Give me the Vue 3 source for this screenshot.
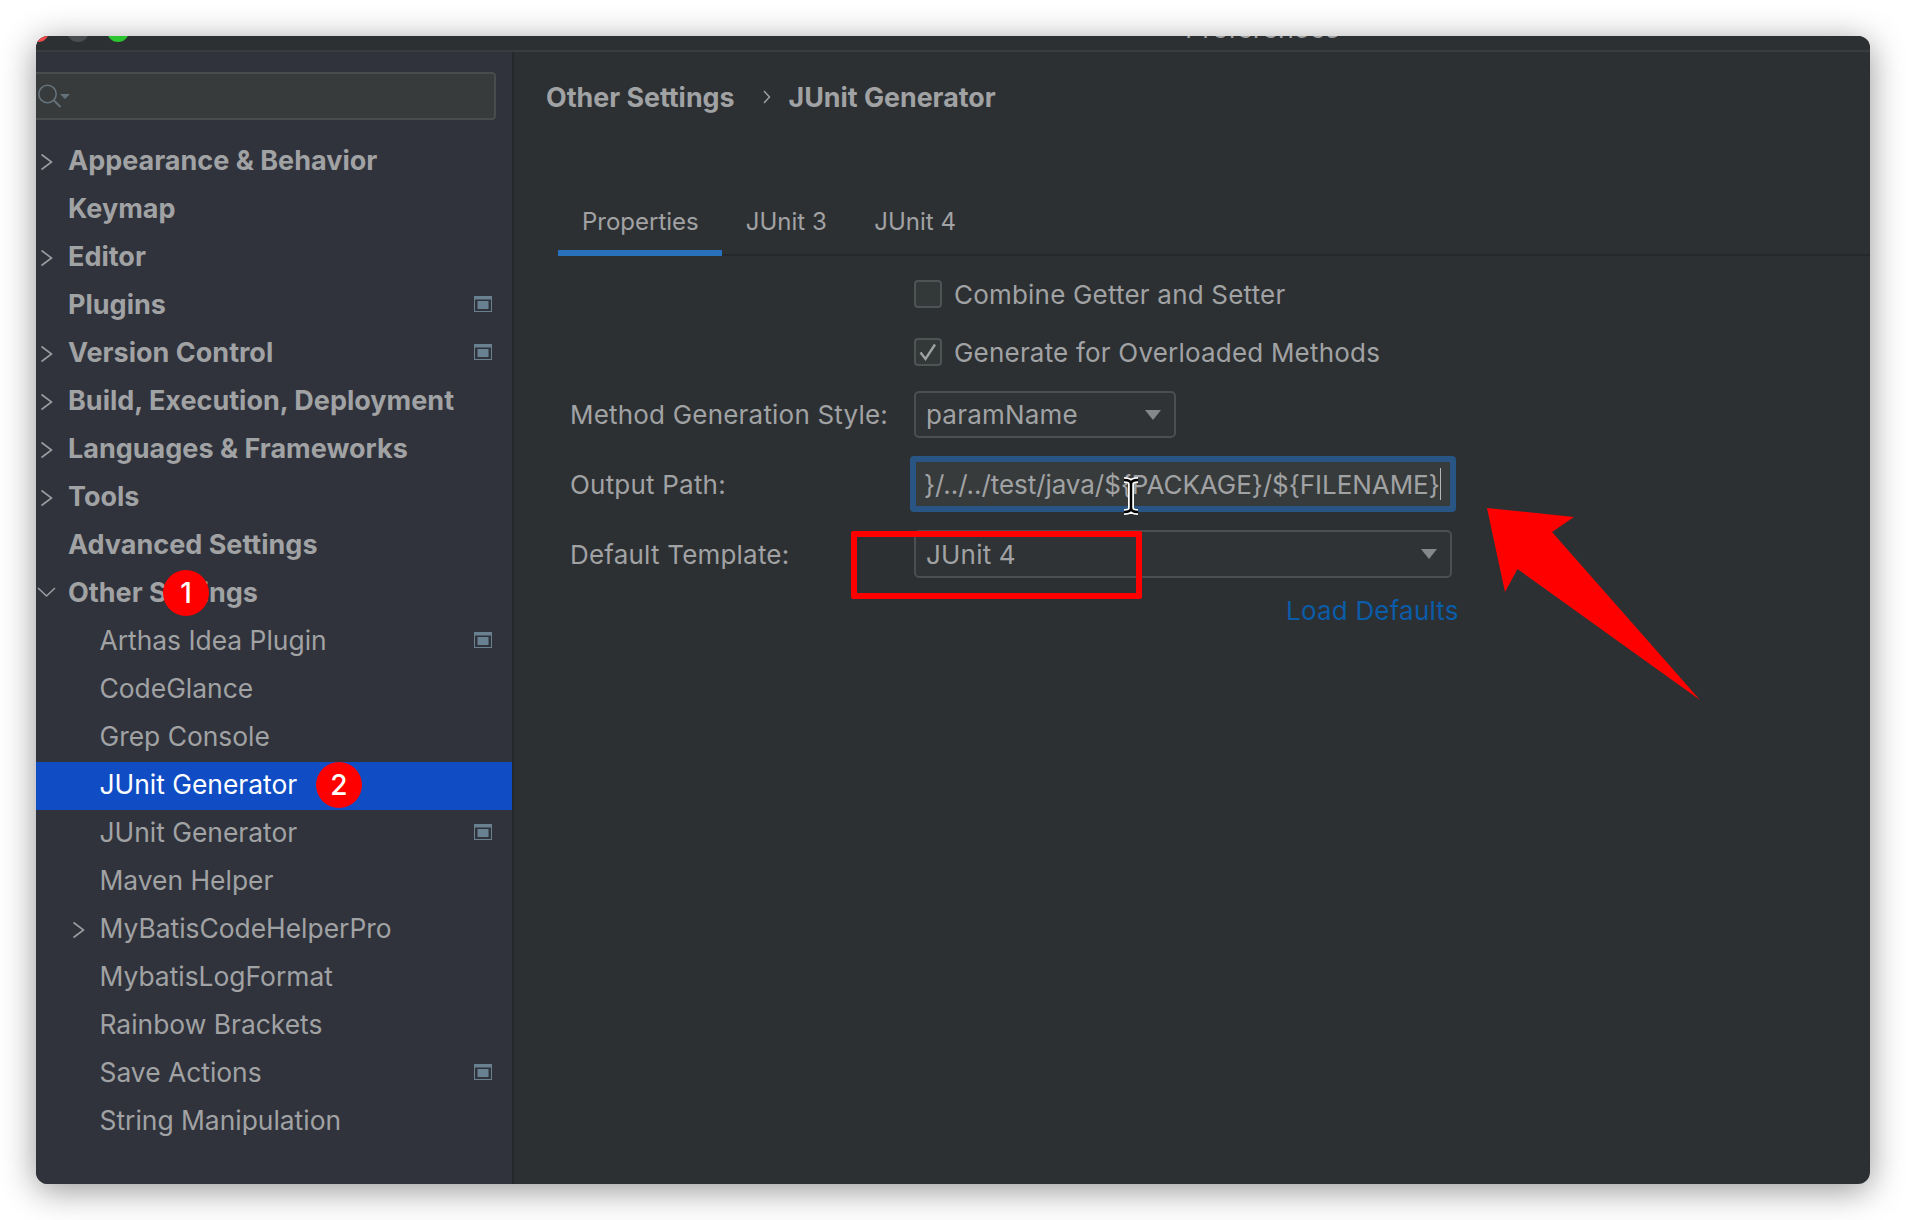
<template>
  <div class="page">
    <div class="window">
      <div class="titlebar">
        <span class="light red"></span>
        <span class="light grey"></span>
        <span class="light green"></span>
        <span class="title">Preferences</span>
      </div>
      <div class="body">
        <aside class="sidebar">
          <div class="search">
            <svg width="34" height="28" viewBox="0 0 34 28">
              <circle cx="9.500" cy="11" r="8.700" fill="none" stroke="#66727b" stroke-width="1.600" />
              <path d="M16 17.500l6.500 6.500" stroke="#66727b" stroke-width="2" />
              <path d="M22 11h10l-5 5z" fill="#66727b" />
            </svg>
          </div>
          <ul class="tree">
            <li
              v-for="(item, i) in items"
              :key="i"
              class="row"
              :class="{ top: !item.child, selected: item.selected }"
            >
              <svg v-if="item.arrow" class="arrow" :class="{ nested: item.child }" width="14" height="18" viewBox="0 0 14 18">
                <path v-if="item.arrow === 'right'" d="M0.500 1.500l10 7.500-10 7.500" fill="none" stroke="#9a9da0" stroke-width="1.600" />
                <path v-else d="M-3 3l8.500 8 8.500-8" fill="none" stroke="#9a9da0" stroke-width="1.600" />
              </svg>
              <span class="label">{{ item.label }}</span>
              <svg v-if="item.badge" class="badge" width="18" height="16" viewBox="0 0 18 16">
                <rect x="0.500" y="0.500" width="17" height="15" fill="none" stroke="#68808f" />
                <rect x="1" y="1" width="16" height="2.500" fill="#68808f" />
                <rect x="3.500" y="5" width="11" height="8" fill="#68808f" />
              </svg>
            </li>
          </ul>
        </aside>
        <main class="content">
          <div class="crumbs">
            <span>Other Settings</span>
            <svg width="10" height="14" viewBox="0 0 10 14">
              <path d="M2 1l5.500 6-5.500 6" fill="none" stroke="#a0a1a3" stroke-width="1.400" />
            </svg>
            <span>JUnit Generator</span>
          </div>
          <div class="tabs">
            <div class="tab active">Properties</div>
            <div class="tab">JUnit 3</div>
            <div class="tab">JUnit 4</div>
          </div>
          <form class="form" @submit.prevent>
            <div class="check-row">
              <span class="check"></span>
              <span>Combine Getter and Setter</span>
            </div>
            <div class="check-row">
              <span class="check">
                <svg width="20" height="20" viewBox="0 0 20 20">
                  <path d="M2.500 10.500l5 6.500 9.500-14.500" fill="none" stroke="#a0a1a3" stroke-width="2.400" />
                </svg>
              </span>
              <span>Generate for Overloaded Methods</span>
            </div>
            <div class="field method">
              <label>Method Generation Style:</label>
              <div class="select short">
                <span>paramName</span>
                <i class="caret"></i>
              </div>
            </div>
            <div class="field output">
              <label>Output Path:</label>
              <div class="path">
                <span>}/../../test/java/${PACKAGE}/${FILENAME}</span>
                <i class="text-caret"></i>
              </div>
            </div>
            <div class="field template">
              <label>Default Template:</label>
              <div class="select wide">
                <span>JUnit 4</span>
                <i class="caret"></i>
              </div>
            </div>
            <a class="defaults">Load Defaults</a>
          </form>
        </main>
      </div>

      <!-- annotations drawn over the screenshot -->
      <span class="step step-1">1</span>
      <span class="step step-2">2</span>
      <div class="red-box"></div>
      <svg class="overlay" width="1834" height="1148" viewBox="0 0 1834 1148">
        <path d="M1451 472l87 9-22 15 148 168-182.500-131-12.500 23z" fill="#ff0000" />
        <g transform="translate(1095 444)">
          <path d="M-7 0q7 0 7 4v24q0 4-7 4M7 0q-7 0-7 4v24q0 4 7 4" fill="none" stroke="#fff" stroke-width="6" />
          <path d="M-7 0q7 0 7 4v24q0 4-7 4M7 0q-7 0-7 4v24q0 4 7 4" fill="none" stroke="#000" stroke-width="2.500" />
        </g>
      </svg>
    </div>
  </div>
</template>

<script setup>
const items = [
  { label: 'Appearance & Behavior', arrow: 'right' },
  { label: 'Keymap' },
  { label: 'Editor', arrow: 'right' },
  { label: 'Plugins', badge: true },
  { label: 'Version Control', arrow: 'right', badge: true },
  { label: 'Build, Execution, Deployment', arrow: 'right' },
  { label: 'Languages & Frameworks', arrow: 'right' },
  { label: 'Tools', arrow: 'right' },
  { label: 'Advanced Settings' },
  { label: 'Other Settings', arrow: 'down' },
  { label: 'Arthas Idea Plugin', child: true, badge: true },
  { label: 'CodeGlance', child: true },
  { label: 'Grep Console', child: true },
  { label: 'JUnit Generator', child: true, selected: true },
  { label: 'JUnit Generator', child: true, badge: true },
  { label: 'Maven Helper', child: true },
  { label: 'MyBatisCodeHelperPro', child: true, arrow: 'right' },
  { label: 'MybatisLogFormat', child: true },
  { label: 'Rainbow Brackets', child: true },
  { label: 'Save Actions', child: true, badge: true },
  { label: 'String Manipulation', child: true }
]
</script>

<style>
body {
  background: #fff;
}
</style>

<style scoped>
.page {
  width: 1906px;
  height: 1220px;
  padding: 36px 0 0 36px;
  box-sizing: border-box;
  overflow: hidden;
  font-family: Inter, "Liberation Sans", sans-serif;
  font-size: 26px;
  color: #a1a2a4;
}
.window {
  position: relative;
  width: 1834px;
  height: 1148px;
  border-radius: 12px;
  overflow: hidden;
  background: #2d3033;
  box-shadow: 0 6px 34px rgba(0, 0, 0, 0.42);
  display: flex;
  flex-direction: column;
}
.titlebar {
  position: relative;
  height: 14px;
  flex: none;
  background: #2d3033;
  border-bottom: 2px solid #3b3c3d;
  overflow: hidden;
}
.light {
  position: absolute;
  top: -16px;
  width: 22px;
  height: 22px;
  border-radius: 50%;
}
.red { left: -9px; background: #fd4a4a; }
.grey { left: 31px; background: #4a4d50; }
.green { left: 71px; background: #2cc52f; }
.title {
  position: absolute;
  top: -22px;
  left: 1149px;
  font-size: 27px;
  line-height: 30px;
  white-space: nowrap;
}
.body {
  flex: 1;
  display: flex;
  min-height: 0;
}
.sidebar {
  width: 476px;
  flex: none;
  background: #30333c;
  border-right: 2px solid #26282a;
  overflow: hidden;
}
.search {
  margin: 20px 0 0 -10px;
  width: 470px;
  height: 48px;
  box-sizing: border-box;
  background: #373b3b;
  border: 2px solid #494c4d;
  border-radius: 4px;
  padding: 9px 0 0 10px;
  display: flex;
}
.search svg {
  display: block;
}
.tree {
  list-style: none;
  margin: 18px 0 0;
  padding: 0;
}
.row {
  position: relative;
  height: 48px;
  box-sizing: border-box;
  display: flex;
  align-items: center;
  padding: 0 0 4px 63.500px;
  font-size: 26.400px;
}
.row.top {
  padding: 0 0 3px 32px;
  font-size: 27px;
  font-weight: 700;
}
.row.selected {
  background: #104dc5;
  color: #fff;
}
.arrow {
  position: absolute;
  left: 5px;
  top: 15px;
  overflow: visible;
}
.arrow.nested {
  left: 37px;
}
.badge {
  position: absolute;
  left: 438px;
  top: 14px;
}
.content {
  flex: 1;
  min-width: 0;
}
.crumbs {
  display: flex;
  align-items: center;
  padding: 26px 0 0 32px;
  height: 37px;
  font-size: 26.800px;
  font-weight: 700;
  line-height: 36px;
}
.crumbs svg {
  margin: 0 17px 0 27px;
}
.tabs {
  display: flex;
  margin: 77px 0 0 44px;
  height: 64px;
  border-bottom: 2px solid #262829;
  box-sizing: border-box;
  font-size: 24px;
}
.tab {
  padding: 0 24px;
  line-height: 60px;
  height: 64px;
  box-sizing: border-box;
}
.tab + .tab {
  margin-left: -0.500px;
}
.tab.active {
  border-bottom: 6px solid #2a71bd;
  padding-right: 23.500px;
}
.form {
  padding: 24px 0 0 56px;
  letter-spacing: 0.2px;
}
.check-row {
  display: flex;
  align-items: center;
  gap: 12px;
  margin-left: 344px;
  height: 28px;
  margin-bottom: 30px;
}
.check {
  width: 28px;
  height: 28px;
  box-sizing: border-box;
  background: #333839;
  border: 2px solid #505354;
  border-radius: 4px;
  display: flex;
  align-items: center;
  justify-content: center;
}
.field {
  display: flex;
  align-items: center;
}
.field label {
  width: 344px;
  flex: none;
}
.select {
  height: 48px;
  box-sizing: border-box;
  border: 2px solid #4c4f50;
  border-radius: 5px;
  background: #2f3335;
  padding: 0 13px 0 10px;
  display: flex;
  align-items: center;
  justify-content: space-between;
}
.short {
  width: 262px;
  height: 47px;
}
.wide {
  width: 538px;
}
.caret {
  width: 0;
  height: 0;
  border-left: 8.500px solid transparent;
  border-right: 8.500px solid transparent;
  border-top: 10px solid #85888b;
}
.method {
  margin-top: -5px;
}
.output {
  margin-top: 18px;
}
.path {
  margin-left: -4px;
  width: 546px;
  height: 56px;
  box-sizing: border-box;
  border: 6px solid #285583;
  border-radius: 4px;
  background: #373b3c;
  padding-left: 8px;
  display: flex;
  align-items: center;
  white-space: nowrap;
  overflow: hidden;
  letter-spacing: -0.05px;
}
.text-caret {
  width: 1px;
  height: 32px;
  background: #b5b6b8;
  flex: none;
}
.template {
  margin-top: 18px;
}
.defaults {
  display: block;
  margin: 15px 0 0 716px;
  line-height: 36px;
  color: #0a5ca8;
}
.step {
  position: absolute;
  width: 46px;
  height: 46px;
  border-radius: 50%;
  background: #ff0000;
  color: #fff;
  text-align: center;
  line-height: 46px;
  font-size: 28px;
  font-weight: 500;
}
.step-1 { left: 127px; top: 534px; }
.step-2 { left: 280px; top: 726px; }
.red-box {
  position: absolute;
  left: 815px;
  top: 495px;
  width: 291px;
  height: 68px;
  box-sizing: border-box;
  border: 6px solid #ff0000;
  border-radius: 2px;
}
.overlay {
  position: absolute;
  left: 0;
  top: 0;
  pointer-events: none;
}
</style>
